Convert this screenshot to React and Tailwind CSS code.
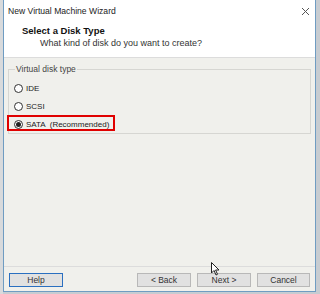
export default function App() {
    const font = { fontFamily: '"Liberation Sans", Arial, sans-serif' };

    const Radio = ({ checked, label }) => (
        <div className="flex items-center gap-[3px] h-[12px]">
            <span className="w-[9px] h-[9px] rounded-full border border-[#333] bg-white flex items-center justify-center">
                {checked && <span className="w-[5px] h-[5px] rounded-full bg-[#222]" />}
            </span>
            <span className="text-[8px] text-[#222] leading-none whitespace-pre">{label}</span>
        </div>
    );

    const Btn = ({ children, focused }) => (
        <button className={`h-[14px] text-[8.5px] leading-none text-[#333] bg-[#e1e1e1] border ${focused ? "border-[#2a6fc0]" : "border-[#b8b8b8]"}`}>
            {children}
        </button>
    );

    return (
        <div className="w-[320px] h-[294px] bg-[#c7ccd1] relative overflow-hidden" style={font}>
            <div className="absolute left-0 top-0 w-[3px] h-full bg-[#d8dadc]" />
            <div className="ml-[3px] w-[313px] h-[292px] border-x border-b border-[#6f9cc2] bg-[#f0f0ec] flex flex-col">
                {/* title bar */}
                <div className="h-[22px] bg-white flex items-center justify-between pl-[4px] pr-[5px] pt-[1px]">
                    <span className="text-[8.6px] text-[#222]">New Virtual Machine Wizard</span>
                    <svg width="9" height="9" viewBox="0 0 9 9">
                        <path d="M1 1 L8 8 M8 1 L1 8" stroke="#555" strokeWidth="1" />
                    </svg>
                </div>
                {/* header */}
                <div className="h-[36px] bg-white border-b border-[#dcdcdc] pt-[3px]">
                    <div className="pl-[18px] text-[9.5px] font-bold text-[#111] leading-[12px]">Select a Disk Type</div>
                    <div className="pl-[36px] text-[9px] text-[#333] leading-[12px]">What kind of disk do you want to create?</div>
                </div>
                {/* body */}
                <div className="flex-1 px-[4px] pt-[7px]">
                    <fieldset className="border border-[#d6d6d2] pl-[5px] pb-[2px] h-[69px]">
                        <legend className="text-[8.5px] text-[#444] px-[1px] ml-[1px] leading-none">Virtual disk type</legend>
                        <div className="flex flex-col gap-[6px] pt-[9px]">
                            <Radio label="IDE" />
                            <Radio label="SCSI" />
                            <div className="relative">
                                <div className="absolute -left-[7px] -top-[4px] w-[108px] h-[16px] border-2 border-[#e00000]" />
                                <Radio checked label="SATA  (Recommended)" />
                            </div>
                        </div>
                    </fieldset>
                </div>
                {/* footer */}
                <div className="h-[25px] border-t border-[#dcdcdc] flex items-start pt-[6px] px-[5px]">
                    <div className="w-[54px] flex"><Btn focused><span className="block w-[52px]">Help</span></Btn></div>
                    <div className="ml-auto flex gap-[6px]">
                        <Btn><span className="block w-[52px]">&lt; Back</span></Btn>
                        <Btn><span className="block w-[52px]">Next &gt;</span></Btn>
                        <Btn><span className="block w-[51px]">Cancel</span></Btn>
                    </div>
                </div>
            </div>
            {/* mouse pointer */}
            <svg className="absolute left-[211px] top-[262px]" width="9" height="14" viewBox="0 0 9 14">
                <path d="M0.5 0.5 L0.5 11 L3 8.5 L5 13 L6.5 12.3 L4.6 8 L8 8 Z" fill="#fff" stroke="#222" strokeWidth="1" />
            </svg>
        </div>
    );
}
